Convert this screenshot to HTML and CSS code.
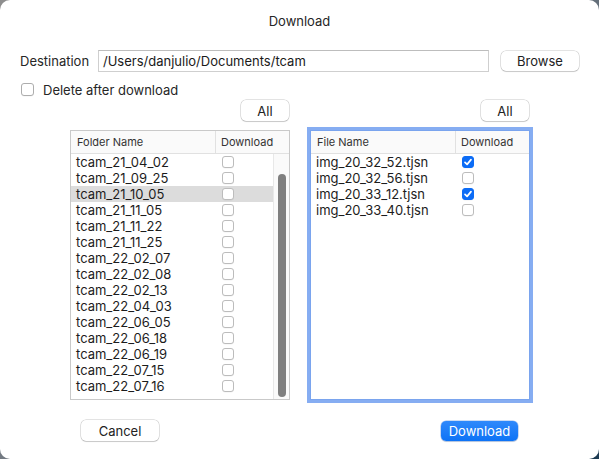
FILE: index.html
```html
<!DOCTYPE html>
<html>
<head>
<meta charset="utf-8">
<title>Download</title>
<link rel="stylesheet" href="styles.css">
</head>
<body>
<div class="window">
  <div class="title">Download</div>
  <div class="dest-row">
    <span class="dest-label">Destination</span>
    <div class="input">/Users/danjulio/Documents/tcam</div>
    <button class="btn browse">Browse</button>
  </div>
  <div class="check-row">
    <span class="cb cb-lg"></span>
    <span>Delete after download</span>
  </div>
  <div class="panes">
    <div class="pane">
      <button class="btn all">All</button>
      <div class="table">
        <div class="thead">
          <div class="th th-name">Folder Name</div>
          <div class="th">Download</div>
        </div>
        <div class="tbody">
          <div class="rows">
            <div class="row"><span class="name">tcam_21_04_02</span><span class="cell"><span class="cb"></span></span></div>
            <div class="row"><span class="name">tcam_21_09_25</span><span class="cell"><span class="cb"></span></span></div>
            <div class="row selected"><span class="name">tcam_21_10_05</span><span class="cell"><span class="cb"></span></span></div>
            <div class="row"><span class="name">tcam_21_11_05</span><span class="cell"><span class="cb"></span></span></div>
            <div class="row"><span class="name">tcam_21_11_22</span><span class="cell"><span class="cb"></span></span></div>
            <div class="row"><span class="name">tcam_21_11_25</span><span class="cell"><span class="cb"></span></span></div>
            <div class="row"><span class="name">tcam_22_02_07</span><span class="cell"><span class="cb"></span></span></div>
            <div class="row"><span class="name">tcam_22_02_08</span><span class="cell"><span class="cb"></span></span></div>
            <div class="row"><span class="name">tcam_22_02_13</span><span class="cell"><span class="cb"></span></span></div>
            <div class="row"><span class="name">tcam_22_04_03</span><span class="cell"><span class="cb"></span></span></div>
            <div class="row"><span class="name">tcam_22_06_05</span><span class="cell"><span class="cb"></span></span></div>
            <div class="row"><span class="name">tcam_22_06_18</span><span class="cell"><span class="cb"></span></span></div>
            <div class="row"><span class="name">tcam_22_06_19</span><span class="cell"><span class="cb"></span></span></div>
            <div class="row"><span class="name">tcam_22_07_15</span><span class="cell"><span class="cb"></span></span></div>
            <div class="row"><span class="name">tcam_22_07_16</span><span class="cell"><span class="cb"></span></span></div>
          </div>
          <div class="scrollbar"><div class="thumb"></div></div>
        </div>
      </div>
    </div>
    <div class="pane">
      <button class="btn all">All</button>
      <div class="table focused">
        <div class="thead">
          <div class="th th-name">File Name</div>
          <div class="th">Download</div>
        </div>
        <div class="tbody">
          <div class="rows">
            <div class="row"><span class="name">img_20_32_52.tjsn</span><span class="cell"><span class="cb checked"><svg viewBox="0 0 12 12" width="12" height="12"><path d="M3 6.3 L5.1 8.4 L9 3.6" fill="none" stroke="#fff" stroke-width="1.7" stroke-linecap="round" stroke-linejoin="round"/></svg></span></span></div>
            <div class="row"><span class="name">img_20_32_56.tjsn</span><span class="cell"><span class="cb"></span></span></div>
            <div class="row"><span class="name">img_20_33_12.tjsn</span><span class="cell"><span class="cb checked"><svg viewBox="0 0 12 12" width="12" height="12"><path d="M3 6.3 L5.1 8.4 L9 3.6" fill="none" stroke="#fff" stroke-width="1.7" stroke-linecap="round" stroke-linejoin="round"/></svg></span></span></div>
            <div class="row"><span class="name">img_20_33_40.tjsn</span><span class="cell"><span class="cb"></span></span></div>
          </div>
        </div>
      </div>
    </div>
  </div>
  <div class="footer">
    <button class="btn cancel">Cancel</button>
    <button class="btn primary">Download</button>
  </div>
</div>
</body>
</html>
```
FILE: styles.css
```css
* { box-sizing: border-box; }
html, body { margin: 0; height: 100%; }
body {
  background: linear-gradient(135deg, #8e8e8e 0%, #6f7780 50%, #1c3a52 100%);
  font-family: Inter, "Liberation Sans", sans-serif;
  font-size: 13px;
  color: #1f1f1f;
}
.window {
  width: 599px;
  height: 459px;
  background: #fff;
  border-radius: 10px;
  display: flex;
  flex-direction: column;
  overflow: hidden;
}
.title {
  height: 42px;
  line-height: 42px;
  text-align: center;
  color: #262626;
}
.dest-row {
  display: flex;
  align-items: center;
  margin-top: 8px;
  height: 22px;
  padding-left: 20px;
}
.dest-label { width: 78px; color: #262626; }
.input {
  width: 391px;
  height: 22px;
  border: 1px solid #cfcfcf;
  border-top-color: #bdbdbd;
  line-height: 20px;
  padding-left: 4px;
  color: #1a1a1a;
}
.btn {
  background: #fff;
  border: none;
  border-radius: 5px;
  box-shadow: 0 0 0 0.5px rgba(0,0,0,0.22), 0 1px 1px rgba(0,0,0,0.12);
  font-family: Inter, "Liberation Sans", sans-serif;
  font-size: 13px;
  color: #222;
  padding: 0;
}
.browse { margin-left: 12px; width: 78px; height: 20px; }
.check-row {
  display: flex;
  align-items: center;
  gap: 9px;
  margin-top: 11px;
  padding-left: 21px;
  height: 13px;
  color: #262626;
}
.cb {
  display: inline-block;
  width: 12px;
  height: 12px;
  border: 1px solid #bcbcbc;
  border-radius: 3px;
  background: #fff;
  box-shadow: 0 0.5px 0.5px rgba(0,0,0,0.06);
}
.cb-lg { width: 13px; height: 13px; border-color: #adadad; }
.cb.checked {
  background: #0c6cf6;
  border-color: #0c6cf6;
  position: relative;
}
.cb.checked svg { position: absolute; left: -1px; top: -1px; }
.panes {
  display: grid;
  grid-template-columns: 220px 220px;
  column-gap: 20px;
  padding-left: 70px;
  margin-top: 4px;
}
.pane {
  display: flex;
  flex-direction: column;
  align-items: flex-end;
}
.all { width: 48px; height: 21px; margin-right: 1px; }
.table {
  margin-top: 9px;
  width: 220px;
  height: 270px;
  border: 1px solid #c9c9c9;
  display: flex;
  flex-direction: column;
  background: #fff;
}
.table.focused {
  border-color: #7aa4ee;
  outline: 3px solid #86adf2;
}
.thead {
  display: grid;
  grid-template-columns: 145px 1fr;
  height: 23px;
  background: #fafafa;
  border-bottom: 1px solid #e1e1e1;
  font-size: 11px;
  color: #333;
}
.th { padding-left: 5px; line-height: 22px; }
.th-name { border-right: 1px solid #e1e1e1; padding-left: 6px; }
.tbody { flex: 1; display: flex; min-height: 0; }
.rows { flex: 1; }
.row {
  display: grid;
  grid-template-columns: 145px 1fr;
  height: 16px;
  align-items: center;
}
.row.selected { background: #dcdcdc; }
.name { padding-left: 5px; color: #1c1c1c; }
.cell { padding-left: 6px; display: flex; align-items: center; }
.scrollbar {
  width: 16px;
  border-left: 1px solid #e8e8e8;
  background: #fafafa;
  padding: 20px 0 2px 4px;
}
.thumb {
  width: 8px;
  height: 100%;
  background: #7f7f7f;
  border-radius: 4px;
}
.footer {
  display: flex;
  justify-content: space-between;
  align-items: center;
  padding: 0 81px;
  margin-top: 20px;
  height: 21px;
}
.cancel { width: 78px; height: 21px; }
.primary {
  width: 77px;
  height: 20px;
  background: linear-gradient(#2f89fb, #0d73f6);
  color: #fff;
  box-shadow: 0 0 0 0.5px rgba(0,80,200,0.4), 0 1px 1px rgba(0,0,0,0.12);
}
```
